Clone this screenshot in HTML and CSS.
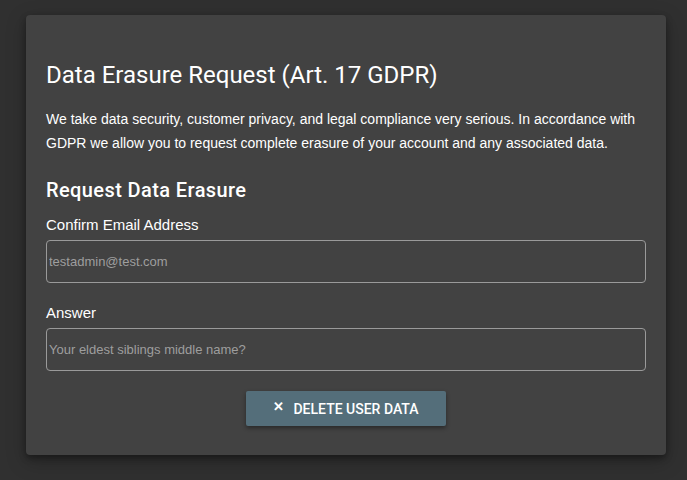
FILE: index.html
```html
<!DOCTYPE html>
<html>
<head>
<meta charset="utf-8">
<link rel="stylesheet" href="styles.css">
</head>
<body>
<div class="page">
  <div class="card">
    <h1 class="title">Data Erasure Request (Art. 17 GDPR)</h1>
    <p class="intro">We take data security, customer privacy, and legal compliance very serious. In accordance with GDPR we allow you to request complete erasure of your account and any associated data.</p>
    <h2 class="subtitle">Request Data Erasure</h2>
    <label class="label">Confirm Email Address</label>
    <input class="field" type="text" placeholder="testadmin@test.com">
    <label class="label label-answer">Answer</label>
    <input class="field" type="text" placeholder="Your eldest siblings middle name?">
    <div class="actions">
      <button class="btn"><span class="x">✕</span>DELETE USER DATA</button>
    </div>
  </div>
</div>
</body>
</html>
```
FILE: styles.css
```css
html, body { margin: 0; padding: 0; background: #303030; }
.page { padding: 15px 21px 25px 26px; }
.card {
  box-sizing: border-box;
  width: 640px;
  height: 440px;
  background: #424242;
  border-radius: 4px;
  box-shadow: 0 3px 6px rgba(0,0,0,0.35), 0 6px 20px rgba(0,0,0,0.25);
  padding: 45px 20px 0 20px;
  color: #fff;
  font-family: Roboto, "Liberation Sans", sans-serif;
}
.title { margin: 0; font-size: 24px; font-weight: 400; line-height: 30px; color: #fff; }
.intro { margin: 17px 0 0; font-family: "Liberation Sans", Arial, sans-serif; font-size: 14px; line-height: 24px; color: #fff; }
.subtitle { margin: 21px 0 0; font-size: 20px; font-weight: 500; line-height: 28px; letter-spacing: 0.4px; }
.label { display: block; margin-top: 10px; font-family: "Liberation Sans", Arial, sans-serif; font-size: 15px; line-height: 22px; color: #fff; }
.label-answer { margin-top: 19px; }
.field {
  display: block; box-sizing: border-box; width: 600px; height: 43px; margin-top: 4px;
  background: transparent; border: 1px solid #9a9a9a; border-radius: 4px;
  padding: 0 2px; font-family: "Liberation Sans", Arial, sans-serif; font-size: 13px; color: #fff; outline: none;
}
.field::placeholder { color: #9e9e9e; }
.actions { display: flex; justify-content: center; margin-top: 20px; }
.btn {
  width: 200px; height: 35px; border: none; border-radius: 2px;
  background: #546e7a; color: #fff; font-family: Roboto, sans-serif; font-weight: 500; font-size: 14px;
  box-shadow: 0 2px 4px rgba(0,0,0,0.4);
  display: flex; align-items: center; justify-content: center; gap: 9px; padding: 0;
}
.x { font-size: 13px; font-weight: 700; position: relative; top: -2px; }
```
